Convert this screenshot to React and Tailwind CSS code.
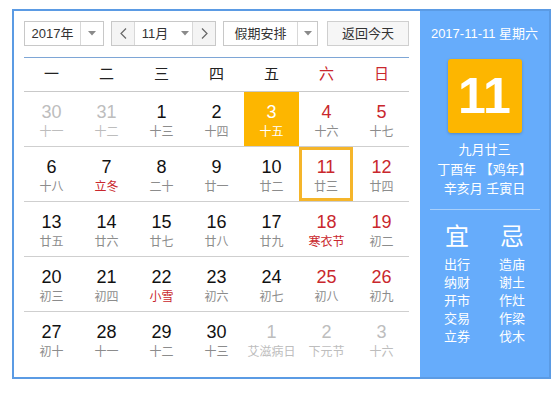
import React from "react";

const weekNames = ["一", "二", "三", "四", "五", "六", "日"];

// t: "o" = other month, "r" = red lunar, "h" = highlighted, "s" = selected
const weeks = [
  [
    { d: 30, l: "十一", t: "o" },
    { d: 31, l: "十二", t: "o" },
    { d: 1, l: "十三" },
    { d: 2, l: "十四" },
    { d: 3, l: "十五", t: "h" },
    { d: 4, l: "十六" },
    { d: 5, l: "十七" },
  ],
  [
    { d: 6, l: "十八" },
    { d: 7, l: "立冬", t: "r" },
    { d: 8, l: "二十" },
    { d: 9, l: "廿一" },
    { d: 10, l: "廿二" },
    { d: 11, l: "廿三", t: "s" },
    { d: 12, l: "廿四" },
  ],
  [
    { d: 13, l: "廿五" },
    { d: 14, l: "廿六" },
    { d: 15, l: "廿七" },
    { d: 16, l: "廿八" },
    { d: 17, l: "廿九" },
    { d: 18, l: "寒衣节", t: "r" },
    { d: 19, l: "初二" },
  ],
  [
    { d: 20, l: "初三" },
    { d: 21, l: "初四" },
    { d: 22, l: "小雪", t: "r" },
    { d: 23, l: "初六" },
    { d: 24, l: "初七" },
    { d: 25, l: "初八" },
    { d: 26, l: "初九" },
  ],
  [
    { d: 27, l: "初十" },
    { d: 28, l: "十一" },
    { d: 29, l: "十二" },
    { d: 30, l: "十三" },
    { d: 1, l: "艾滋病日", t: "o" },
    { d: 2, l: "下元节", t: "o" },
    { d: 3, l: "十六", t: "o" },
  ],
];

const yi = ["出行", "纳财", "开市", "交易", "立券"];
const ji = ["造庙", "谢土", "作灶", "作梁", "伐木"];

function Arrow() {
  return (
    <svg width="8" height="5" viewBox="0 0 8 5">
      <path d="M0 0 H8 L4 4.5 Z" fill="#8a8a8a" />
    </svg>
  );
}

function DayCell({ day, col }) {
  const weekend = col >= 5;
  let numColor = weekend ? "text-[#c9272d]" : "text-[#111]";
  let lunarColor = "text-[#8c8c8c]";
  if (day.t === "o") {
    numColor = "text-[#bdbdbd]";
    lunarColor = "text-[#bdbdbd]";
  }
  if (day.t === "r") lunarColor = "text-[#c9272d]";

  if (day.t === "h") {
    return (
      <div className="h-[54px] bg-[#fdb600] flex flex-col items-center pt-[9px]">
        <span className="text-[18px] leading-[22px] text-white">{day.d}</span>
        <span className="text-[12px] leading-[18px] text-white">{day.l}</span>
      </div>
    );
  }

  if (day.t === "s") {
    return (
      <div className="h-[54px] w-[54px] border-[3px] border-[#f5b52a] flex flex-col items-center pt-[6px]">
        <span className={`text-[18px] leading-[22px] ${numColor}`}>{day.d}</span>
        <span className={`text-[12px] leading-[18px] ${lunarColor}`}>{day.l}</span>
      </div>
    );
  }

  return (
    <div className="h-[54px] flex flex-col items-center pt-[9px]">
      <span className={`text-[18px] leading-[22px] ${numColor}`}>{day.d}</span>
      <span className={`text-[12px] leading-[18px] whitespace-nowrap ${lunarColor}`}>
        {day.l}
      </span>
    </div>
  );
}

export default function App() {
  return (
    <div
      className="w-[559px] h-[393px] bg-white pt-[9px] pl-[12px]"
      style={{ fontFamily: '"Liberation Sans", Arial, "Noto Sans CJK SC", sans-serif' }}
    >
      <div className="w-[539px] h-[370px] border-2 border-[#5b9be4] flex">
        {/* left calendar */}
        <div className="w-[406px] pl-[10px] pt-[10px]">
          <div className="w-[385px] flex h-[25px] text-[13px] text-[#333]">
            <div className="w-[80px] flex border border-[#c8c8c8] bg-white">
              <div className="w-[55px] flex items-center justify-center">2017年</div>
              <div className="flex-1 border-l border-[#d8d8d8] flex items-center justify-center">
                <Arrow />
              </div>
            </div>
            <div className="w-[105px] ml-[7px] flex border border-[#c8c8c8]">
              <div className="w-[22px] bg-[#f4f4f4] flex items-center justify-center text-[#666]">
                <svg width="7" height="11" viewBox="0 0 7 11">
                  <path d="M6 0.5 L1 5.5 L6 10.5" fill="none" stroke="#666" strokeWidth="1.2" />
                </svg>
              </div>
              <div className="flex-1 border-x border-[#d8d8d8] flex items-center justify-center gap-[13px] bg-white">
                <span className="ml-[4px]">11月</span>
                <Arrow />
              </div>
              <div className="w-[22px] bg-[#f4f4f4] flex items-center justify-center">
                <svg width="7" height="11" viewBox="0 0 7 11">
                  <path d="M1 0.5 L6 5.5 L1 10.5" fill="none" stroke="#666" strokeWidth="1.2" />
                </svg>
              </div>
            </div>
            <div className="w-[95px] ml-[7px] flex border border-[#c8c8c8] bg-white">
              <div className="w-[73px] flex items-center justify-center">假期安排</div>
              <div className="flex-1 border-l border-[#d8d8d8] flex items-center justify-center">
                <Arrow />
              </div>
            </div>
            <div className="w-[82px] ml-[9px] border border-[#cfcfcf] bg-[#f6f6f6] flex items-center justify-center">
              返回今天
            </div>
          </div>

          <div className="w-[385px] mt-[11px] h-[35px] border-t border-[#7ea6d6] border-b border-b-[#c9c9c9] grid grid-cols-7 items-center text-[15px]">
            {weekNames.map((w, i) => (
              <div
                key={w}
                className={`text-center ${i >= 5 ? "text-[#c9272d]" : "text-[#222]"}`}
              >
                {w}
              </div>
            ))}
          </div>

          <div className="w-[385px]">
            {weeks.map((row, r) => (
              <div
                key={r}
                className={`grid grid-cols-7 ${r < 4 ? "border-b border-[#cfcfcf]" : ""}`}
              >
                {row.map((day, c) => (
                  <DayCell key={c} day={day} col={c} />
                ))}
              </div>
            ))}
          </div>
        </div>

        {/* right panel */}
        <div className="flex-1 bg-[#66acfb] text-white flex flex-col items-center">
          <div className="mt-[14px] text-[13px] leading-[18px]">2017-11-11 星期六</div>
          <div className="mt-[16px] w-[74px] h-[74px] rounded-[3px] bg-[#fdb600] shadow-[0_1px_3px_rgba(0,0,0,0.2)] flex items-center justify-center">
            <span className="text-[50px] leading-none font-bold">11</span>
          </div>
          <div className="mt-[7px] text-[13px] leading-[19.5px] text-center">
            <div>九月廿三</div>
            <div>丁酉年 【鸡年】</div>
            <div>辛亥月 壬寅日</div>
          </div>
          <div className="mt-[10px] w-[110px] h-px bg-[#a9d0fb]" />
          <div className="mt-[14px] flex">
            <div className="w-[55px] flex flex-col items-center">
              <div className="text-[24px] leading-[26px]">宜</div>
              <div className="mt-[6px] text-[13px] leading-[18px] text-center">
                {yi.map((x) => (
                  <div key={x}>{x}</div>
                ))}
              </div>
            </div>
            <div className="w-[55px] flex flex-col items-center">
              <div className="text-[24px] leading-[26px]">忌</div>
              <div className="mt-[6px] text-[13px] leading-[18px] text-center">
                {ji.map((x) => (
                  <div key={x}>{x}</div>
                ))}
              </div>
            </div>
          </div>
        </div>
      </div>
    </div>
  );
}
